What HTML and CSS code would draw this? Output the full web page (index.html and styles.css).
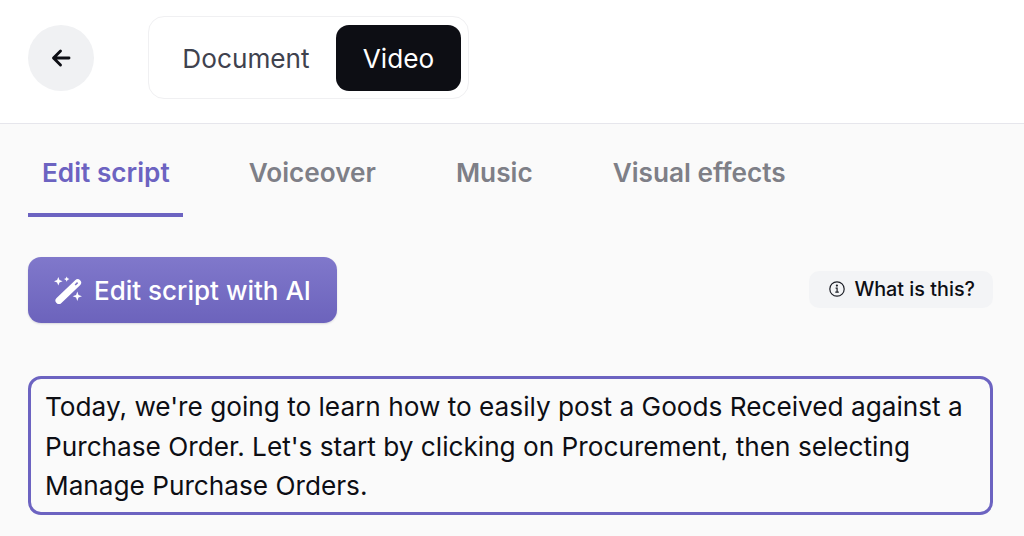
FILE: index.html
```html
<!DOCTYPE html>
<html lang="en">
<head>
    <meta charset="UTF-8">
    <title>Edit script</title>
    <link rel="stylesheet" href="styles.css">
</head>
<body>
    <header class="topbar">
        <button class="back-btn">
            <svg width="20" height="20" viewBox="0 0 20 20" fill="none" stroke="#0d0e14" stroke-width="2.9" stroke-linecap="round" stroke-linejoin="round">
                <path d="M18 10H3M9.5 3L2.5 10l7 7"/>
            </svg>
        </button>
        <div class="switch">
            <span class="switch-item">Document</span>
            <span class="switch-item switch-active">Video</span>
        </div>
    </header>

    <main class="content">
        <nav class="tabs">
            <a class="tab tab-active">Edit script</a>
            <a class="tab">Voiceover</a>
            <a class="tab">Music</a>
            <a class="tab">Visual effects</a>
        </nav>

        <div class="actions">
            <button class="ai-btn">
                <svg width="28" height="28" viewBox="0 0 28 28" fill="#fff">
                    <path d="M5 24.6L23.6 6.7" fill="none" stroke="#fff" stroke-width="7" stroke-linecap="round"/>
                    <path d="M21.2 9l2.4-2.3" fill="none" stroke="#7a70c6" stroke-width="1.6"/>
                    <path d="M4.3 1l1.2 3.1 3.1 1.2-3.1 1.2-1.2 3.1-1.2-3.1L0 5.3l3.1-1.2zM12.7.4l.8 1.9 1.9.8-1.9.8-.8 1.9-.8-1.9-1.9-.8 1.9-.8zM23.3 15.6l1.2 3.5 3.5 1.2-3.5 1.2-1.2 3.5-1.2-3.5-3.5-1.2 3.5-1.2z"/>
                </svg>
                Edit script with AI
            </button>
            <button class="help-btn">
                <svg width="16" height="16" viewBox="0 0 16 16" fill="none" stroke="#1d1f27" stroke-width="1.2">
                    <circle cx="8" cy="8" r="7.2"/>
                    <path d="M6.6 7.1H8.1v4M6.3 11.2h3.5"/>
                    <circle cx="7.9" cy="4.6" r=".5" fill="#1d1f27"/>
                </svg>
                What is this?
            </button>
        </div>

        <div class="script-box">Today, we're going to learn how to easily post a Goods Received against a Purchase Order. Let's start by clicking on Procurement, then selecting Manage Purchase Orders.</div>
    </main>
</body>
</html>
```

FILE: styles.css
```css
html, body {
    height: 100%;
}

body {
    margin: 0;
    font-family: 'Inter', sans-serif;
    background-color: #fafafa;
    color: #0d0e14;
    overflow: hidden;
}

button {
    font-family: inherit;
    border: none;
    cursor: pointer;
}

.topbar {
    display: flex;
    align-items: center;
    gap: 54px;
    height: 124px;
    box-sizing: border-box;
    padding: 0 28px 8px;
    background-color: #ffffff;
    border-bottom: 1px solid #e6e6ec;
}

.back-btn {
    display: flex;
    align-items: center;
    justify-content: center;
    width: 66px;
    height: 66px;
    padding: 0;
    border-radius: 50%;
    background-color: #f0f1f3;
}

.switch {
    display: flex;
    width: 321px;
    height: 83px;
    box-sizing: border-box;
    padding: 8px 7px 7px;
    border: 1px solid #f0f0f2;
    border-radius: 16px;
    background-color: #ffffff;
}

.switch-item {
    display: flex;
    align-items: center;
    justify-content: center;
    font-size: 26.2px;
    color: #3f424e;
}

.switch-item:first-child {
    width: 180px;
}

.switch-active {
    width: 125px;
    border-radius: 13px;
    background-color: #0d0e14;
    color: #ffffff;
}

.content {
    padding: 0 31px 0 28px;
}

.tabs {
    display: flex;
    height: 93px;
}

.tab {
    display: flex;
    align-items: center;
    box-sizing: border-box;
    height: 93px;
    padding: 7px 14px 0;
    margin-right: 52px;
    border-bottom: 4px solid transparent;
    font-size: 26.2px;
    font-weight: 600;
    color: #7e7f87;
}

.tab-active {
    padding-right: 13px;
    color: #6c63c1;
    border-bottom-color: #6c63c1;
}

.actions {
    display: flex;
    align-items: center;
    justify-content: space-between;
    margin-top: 40px;
}

.ai-btn {
    display: flex;
    align-items: center;
    gap: 12px;
    width: 309px;
    height: 66px;
    padding: 0 0 0 26px;
    border-radius: 13px;
    background: linear-gradient(180deg, #8078cb 0%, #6c63bc 100%);
    box-shadow: 0 1px 2px rgba(24, 24, 60, 0.15);
    color: #ffffff;
    font-size: 26px;
    font-weight: 500;
}

.help-btn {
    display: flex;
    align-items: center;
    gap: 9px;
    height: 37px;
    margin-bottom: 2px;
    padding: 0 18px 0 20px;
    border-radius: 10px;
    background-color: #f3f4f6;
    color: #0d0e14;
    font-size: 19.8px;
    font-weight: 500;
}

.script-box {
    margin-top: 53px;
    box-sizing: border-box;
    height: 139px;
    padding: 8px 14px;
    border: 3px solid #6c63c1;
    border-radius: 13px;
    font-size: 26.2px;
    line-height: 39.5px;
    color: #0d0e14;
}
```
